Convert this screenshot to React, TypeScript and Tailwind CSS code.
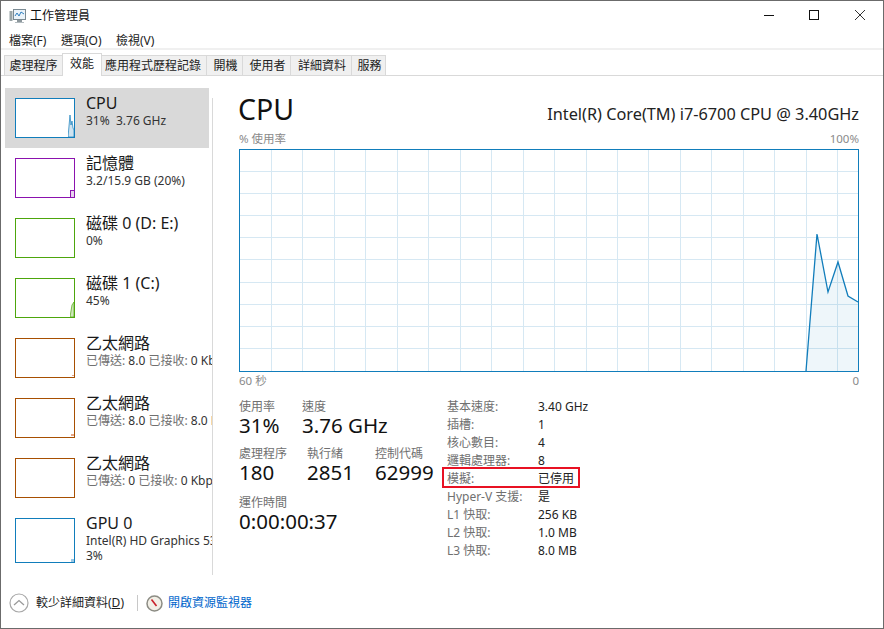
import { ReactNode } from 'react';

const FONT = '"Noto Sans", "Noto Sans CJK TC", sans-serif';

const tabs = [
  { label: '處理程序', w: 'w-[59px]' },
  { label: '效能', w: 'w-[40px]', active: true },
  { label: '應用程式歷程記錄', w: 'w-[106px] pr-[2px]' },
  { label: '開機', w: 'w-[37px] pl-[2px]' },
  { label: '使用者', w: 'w-[49px] pl-[2px]' },
  { label: '詳細資料', w: 'w-[62px] pl-[2px]' },
  { label: '服務', w: 'w-[35px] pl-[2px]' },
];

const details = [
  ['基本速度:', '3.40 GHz'],
  ['插槽:', '1'],
  ['核心數目:', '4'],
  ['邏輯處理器:', '8'],
  ['模擬:', '已停用'],
  ['Hyper-V 支援:', '是'],
  ['L1 快取:', '256 KB'],
  ['L2 快取:', '1.0 MB'],
  ['L3 快取:', '8.0 MB'],
];

const cpuLine = '567,222 578,85 589,143 599,113 609,147 619,153';

function MiniChart({ border, tall, children }: { border: string; tall?: boolean; children?: ReactNode }) {
  return (
    <div className={`w-[60px] ${tall ? 'h-[45px]' : 'h-[40px]'} border ${border} bg-white shrink-0 flex justify-end items-end`}>
      {children}
    </div>
  );
}

function SideItem({ name, sub, gray, chart, active, tall, sub2 }: {
  name: string; sub: ReactNode; gray?: boolean; chart: ReactNode; active?: boolean; tall?: boolean; sub2?: string;
}) {
  return (
    <div className={`${tall ? 'h-[66px]' : 'h-[60px]'} w-[204px] flex gap-[11px] pl-[10px] pt-[10px] ${active ? 'bg-[#d9d9d9]' : ''}`}>
      {chart}
      <div className="-mt-[5px] whitespace-nowrap">
        <div className="text-[16px] leading-[20px] text-[#1a1a1a]">{name}</div>
        <div className={`text-[12px] leading-[15px] ${gray ? 'text-[#707070]' : 'text-[#333]'}`}>{sub}</div>
        {sub2 && <div className="text-[12px] leading-[15px] text-[#333]">{sub2}</div>}
      </div>
    </div>
  );
}

function Stat({ label, value, className }: { label: string; value: string; className?: string }) {
  return (
    <div className={className}>
      <div className="text-[12px] leading-[16px] text-[#707070] whitespace-nowrap">{label}</div>
      <div className="text-[20.5px] leading-[22px] -mt-px text-[#111] whitespace-nowrap">{value}</div>
    </div>
  );
}

function CpuGraph() {
  const vs = Array.from({ length: 19 }, (_, i) => Math.round(32 + 31.45 * i) + 0.5);
  const hs = [22, 44, 66, 88, 110, 133, 155, 177, 199];
  return (
    <svg width="620" height="223" className="block">
      <rect width="620" height="223" fill="#fff" />
      {vs.map((x) => <line key={x} x1={x} y1="0" x2={x} y2="223" stroke="#d6e8f3" />)}
      {hs.map((y) => <line key={y} x1="0" y1={y + 0.5} x2="620" y2={y + 0.5} stroke="#d6e8f3" />)}
      <polygon points={`${cpuLine} 619,222`} fill="#117dbb" fillOpacity="0.07" />
      <polyline points={cpuLine} fill="none" stroke="#117dbb" strokeWidth="1.3" />
      <rect x="0.5" y="0.5" width="619" height="222" fill="none" stroke="#117dbb" />
    </svg>
  );
}

export default function App() {
  return (
    <div
      className="w-[884px] h-[629px] bg-white border border-[#6b6b6b] flex flex-col overflow-hidden relative"
      style={{ fontFamily: FONT }}
    >
      {/* title bar */}
      <div className="h-[29px] flex items-center pl-[8px] shrink-0">
        <svg width="17" height="16" viewBox="0 0 17 16" className="shrink-0">
          <rect x="0.5" y="3" width="3" height="10" fill="#9aa5a8" />
          <rect x="4.5" y="1.5" width="12" height="10" fill="#eaf3fa" stroke="#7a8a93" />
          <path d="M6 8 L8 5 L10 8 L12 4 L15 6" fill="none" stroke="#2f7fc0" />
          <rect x="8" y="12" width="5" height="2" fill="#8c979c" />
          <rect x="6" y="14" width="9" height="1" fill="#b5bdc1" />
        </svg>
        <span className="ml-[4px] text-[12px] text-[#111]">工作管理員</span>
        <div className="ml-auto flex items-center h-full">
          <svg width="140" height="29" viewBox="0 0 140 29" className="block">
            <line x1="21" y1="14.5" x2="31" y2="14.5" stroke="#111" />
            <rect x="66.5" y="9.5" width="9" height="9" fill="none" stroke="#111" />
            <path d="M112 9 L122 19 M122 9 L112 19" stroke="#333" />
          </svg>
        </div>
      </div>

      {/* menu */}
      <div className="h-[20px] flex items-center pl-[8px] pt-[4px] text-[12px] text-[#222] shrink-0 border-b-2 border-[#f0f0f0]">
        <span className="w-[52px]">檔案(F)</span>
        <span className="w-[55px]">選項(O)</span>
        <span>檢視(V)</span>
      </div>

      {/* tabs */}
      <div className="h-[26px] flex items-end pl-[3px] border-b border-[#d9d9d9] shrink-0">
        {tabs.map((t) => (
          <div
            key={t.label}
            className={`${t.w} flex items-center justify-center text-[12px] text-[#222] border-t border-x border-[#d9d9d9] -mr-px ${
              t.active ? 'h-[23px] bg-white relative z-10 -mb-px pb-[3px]' : 'h-[20px] bg-[#f0f0f0]'
            }`}
          >
            {t.label}
          </div>
        ))}
      </div>

      {/* body */}
      <div className="flex-1 flex pt-[12px] min-h-0">
        <div className="w-[211px] pl-[4px] shrink-0 overflow-hidden">
          <SideItem
            active
            name="CPU"
            sub={'31%\u00a0 3.76 GHz'}
            chart={
              <MiniChart border="border-[#117dbb]">
                <svg width="6" height="24" className="block">
                  <path d="M0,24 L2,2 L3,12 L4,8 L5,15 L6,17 L6,24 Z" fill="#cfe3f0" stroke="#117dbb" strokeWidth="0.7" />
                </svg>
              </MiniChart>
            }
          />
          <SideItem
            name="記憶體"
            sub="3.2/15.9 GB (20%)"
            chart={
              <MiniChart border="border-[#8b12ae]">
                <div className="w-[4px] h-[7px] bg-[#e6d4ec] border-l border-t border-[#8b12ae]" />
              </MiniChart>
            }
          />
          <SideItem name="磁碟 0 (D: E:)" sub="0%" chart={<MiniChart border="border-[#4da60c]" />} />
          <SideItem
            name="磁碟 1 (C:)"
            sub="45%"
            chart={
              <MiniChart border="border-[#4da60c]">
                <svg width="4" height="15" className="block">
                  <path d="M0,15 L2,3 L4,0 L4,15 Z" fill="#cfe6bd" stroke="#4da60c" strokeWidth="0.7" />
                </svg>
              </MiniChart>
            }
          />
          <SideItem
            name="乙太網路"
            gray
            sub={<>已傳送: <span className="text-[#333]">8.0</span> 已接收: <span className="text-[#333]">0 Kbps</span></>}
            chart={<MiniChart border="border-[#a74f01]"><div className="w-[2px] h-[1px] bg-[#e8a888] mb-px" /></MiniChart>}
          />
          <SideItem
            name="乙太網路"
            gray
            sub={<>已傳送: <span className="text-[#333]">8.0</span> 已接收: <span className="text-[#333]">8.0 Kbps</span></>}
            chart={<MiniChart border="border-[#a74f01]"><div className="w-[3px] h-[2px] bg-[#e8a888] mb-px" /></MiniChart>}
          />
          <SideItem
            name="乙太網路"
            gray
            sub={<>已傳送: <span className="text-[#333]">0</span> 已接收: <span className="text-[#333]">0 Kbps</span></>}
            chart={<MiniChart border="border-[#a74f01]" />}
          />
          <SideItem
            tall
            name="GPU 0"
            sub="Intel(R) HD Graphics 530"
            sub2="3%"
            chart={<MiniChart tall border="border-[#117dbb]"><div className="w-[3px] h-[3px] bg-[#9cc8e4]" /></MiniChart>}
          />
        </div>

        {/* divider */}
        <div className="w-px h-[477px] mt-[10px] bg-[#d9d9d9] shrink-0" />

        {/* main */}
        <div className="w-[620px] ml-[26px] mt-[3px] shrink-0 relative">
          <div className="flex items-end justify-between h-[36px]">
            <div className="text-[28.5px] leading-[36px] -ml-px text-[#111]">CPU</div>
            <div className="text-[16.3px] leading-[22px] text-[#222] mb-[2px]">Intel(R) Core(TM) i7-6700 CPU @ 3.40GHz</div>
          </div>
          <div className="flex justify-between text-[11.5px] leading-[14px] text-[#8a8a8a] mt-[5px] mb-[3px]">
            <span>% 使用率</span>
            <span>100%</span>
          </div>
          <CpuGraph />
          <div className="flex justify-between text-[11.5px] leading-[14px] text-[#8a8a8a] mt-[2px]">
            <span>60 秒</span>
            <span>0</span>
          </div>

          <div className="flex mt-[11px]">
            <div className="w-[208px] shrink-0">
              <div className="flex">
                <Stat className="w-[63px]" label="使用率" value="31%" />
                <Stat label="速度" value="3.76 GHz" />
              </div>
              <div className="flex mt-[10px]">
                <Stat className="w-[68px]" label="處理程序" value="180" />
                <Stat className="w-[68px]" label="執行緒" value="2851" />
                <Stat label="控制代碼" value="62999" />
              </div>
              <Stat className="mt-[12px]" label="運作時間" value="0:00:00:37" />
            </div>
            <div className="text-[12px] leading-[18px] relative -mt-px">
              {details.map(([k, v]) => (
                <div key={k} className="flex h-[18px]">
                  <span className="w-[91px] text-[#707070] whitespace-nowrap">{k}</span>
                  <span className="text-[#222] whitespace-nowrap">{v}</span>
                </div>
              ))}
              <div className="absolute left-[-5px] top-[69px] w-[138px] h-[21px] border-2 border-[#e81123]" />
            </div>
          </div>
        </div>
      </div>

      {/* footer */}
      <div className="h-[52px] shrink-0 flex items-center pl-[8px] pt-[2px] text-[12px]">
        <svg width="20" height="20" viewBox="0 0 20 20" className="shrink-0">
          <circle cx="10" cy="10" r="9" fill="#fff" stroke="#a8a8a8" strokeWidth="1.2" />
          <path d="M5 12 L10 7.5 L15 12" fill="none" stroke="#9a9a9a" strokeWidth="1.3" />
        </svg>
        <span className="ml-[7px] text-[#222]">較少詳細資料(<span className="underline">D</span>)</span>
        <div className="w-px h-[16px] bg-[#c8c8c8] ml-[13px]" />
        <svg width="17" height="17" viewBox="0 0 17 17" className="ml-[8px] shrink-0">
          <circle cx="8.5" cy="8.5" r="7.5" fill="#f2efe6" stroke="#8c8c84" strokeWidth="1.5" />
          <path d="M5.5 4.5 L10.5 11" stroke="#c8202a" strokeWidth="1.6" />
        </svg>
        <span className="ml-[5px] text-[#0066cc]">開啟資源監視器</span>
      </div>
    </div>
  );
}
